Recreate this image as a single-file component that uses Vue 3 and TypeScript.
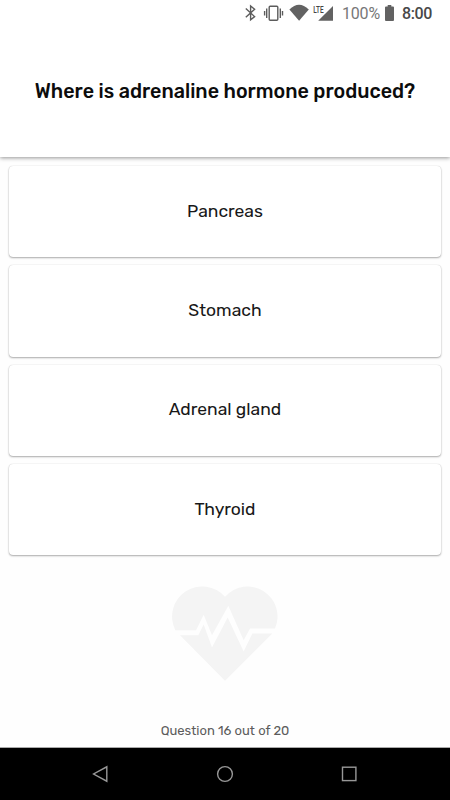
<script setup lang="ts">
interface Answer {
  id: string
  label: string
}

const question = 'Where is adrenaline hormone produced?'
const answers: Answer[] = [
  { id: 'pancreas', label: 'Pancreas' },
  { id: 'stomach', label: 'Stomach' },
  { id: 'adrenal', label: 'Adrenal gland' },
  { id: 'thyroid', label: 'Thyroid' },
]
const current = 16
const total = 20
</script>

<template>
  <div class="screen">
    <header class="top">
      <div class="status">
        <svg class="icons" width="90" height="26" viewBox="0 0 90 26">
          <path class="line" d="M1.8 8.6 10.6 16.6 6.6 19.8V6L10.6 9.2 1.8 17.2" />
          <g class="line">
            <rect x="25.2" y="6.2" width="8.6" height="14" rx="1" />
            <path d="M22.7 8.5v9.5M20.6 11v4.5M36.3 8.5v9.5M38.5 11v4.5" />
          </g>
          <path class="solid" d="M45.4 9.6Q55-.2 64.8 9.6L55.1 20.8Z" />
          <text class="lte" x="69.3" y="12.5" textLength="10.3" lengthAdjust="spacingAndGlyphs">LTE</text>
          <path class="solid" d="M89 6V20.8H74.2Z" />
        </svg>
        <span class="percent">100%</span>
        <svg class="battery" width="9" height="16" viewBox="0 0 9 16">
          <path class="solid" d="M0 2.5Q0 1.5 1 1.5H2.7V0H6.3V1.5H8Q9 1.5 9 2.5V15Q9 16 8 16H1Q0 16 0 15Z" />
        </svg>
        <span class="clock">8:00</span>
      </div>
      <h1 class="question">{{ question }}</h1>
    </header>

    <main class="answers">
      <button v-for="answer in answers" :key="answer.id" class="answer" type="button">
        {{ answer.label }}
      </button>
    </main>

    <section class="footer">
      <svg class="heart" width="106" height="95" viewBox="36 32.5 318 285">
        <path d="M46 165A90.4 90.4 0 0 1 195 65A89.8 89.8 0 0 1 345 160H270L251 195 205 92 156 180 131 119 108 165Z" />
        <path d="M60 180H115L131 148 156 217 203 127 251 229 277 175H337L195 317Z" />
      </svg>
      <p class="progress">Question {{ current }} out of {{ total }}</p>
    </section>

    <nav class="navbar">
      <svg width="18" height="18" viewBox="0 0 18 18"><path d="M15.8 1.8V16.2L2.6 9Z" /></svg>
      <svg width="18" height="18" viewBox="0 0 18 18"><circle cx="9" cy="9" r="7.4" /></svg>
      <svg width="18" height="18" viewBox="0 0 18 18"><rect x="2.5" y="2.2" width="13.4" height="13.4" /></svg>
    </nav>
  </div>
</template>

<style>
body {
  margin: 0;
  background: #fefefe;
}
</style>

<style scoped>
.screen {
  display: flex;
  flex-direction: column;
  width: 450px;
  height: 800px;
  overflow: hidden;
  background: #fefefe;
  font-family: Rubik, Roboto, sans-serif;
  color: #0c0c0c;
}

.top {
  display: flex;
  flex-direction: column;
  flex: none;
  height: 157px;
  background: #fff;
  box-shadow: 0 1px 4px rgba(0, 0, 0, 0.42);
}

.status {
  display: flex;
  align-items: center;
  height: 26px;
  padding-left: 244px;
  font-family: Roboto, sans-serif;
  font-size: 16px;
  line-height: 26px;
}

.icons {
  flex: none;
}

.line {
  fill: none;
  stroke: #5c5c5c;
  stroke-width: 1.4;
}

.solid {
  fill: #626262;
}

.lte {
  font: 500 9px Roboto, sans-serif;
  fill: #444;
}

.percent {
  width: 43px;
  padding: 2px 0 0 8px;
  box-sizing: border-box;
  color: #777;
  letter-spacing: -0.2px;
}

.battery {
  flex: none;
  margin-left: 8px;
}

.clock {
  margin-left: 8px;
  padding-top: 2px;
  font-weight: 500;
  color: #484848;
  letter-spacing: -0.4px;
}

.question {
  display: flex;
  align-items: center;
  justify-content: center;
  height: 131px;
  margin: 0;
  font-size: 19.7px;
  font-weight: 500;
  white-space: nowrap;
}

.answers {
  display: flex;
  flex-direction: column;
  flex: none;
  gap: 8px;
  padding: 9px 9px 0;
}

.answer {
  display: flex;
  align-items: center;
  justify-content: center;
  box-sizing: border-box;
  width: 432px;
  height: 91.3px;
  padding: 0 0 2px;
  border: 0;
  border-radius: 4px;
  background: #fff;
  box-shadow: 0 1px 2px rgba(0, 0, 0, 0.32), 0 0 1px rgba(0, 0, 0, 0.2);
  font: 400 17.5px Rubik, Roboto, sans-serif;
  color: #181818;
}

.footer {
  display: flex;
  flex: 1;
  flex-direction: column;
  align-items: center;
  padding-top: 31px;
}

.heart {
  flex: none;
  overflow: visible;
  fill: #f4f4f4;
}

.progress {
  margin: 41px 0 0;
  font-size: 13px;
  font-weight: 400;
  line-height: 18px;
  color: #5c5c5c;
}

.navbar {
  display: flex;
  align-items: center;
  justify-content: space-between;
  flex: none;
  box-sizing: border-box;
  height: 53px;
  padding: 0 92px 0 91px;
  border-top: 1px solid #aaa;
  background: #000;
}

.navbar svg {
  fill: none;
  stroke: #989898;
  stroke-width: 1.4;
}
</style>
